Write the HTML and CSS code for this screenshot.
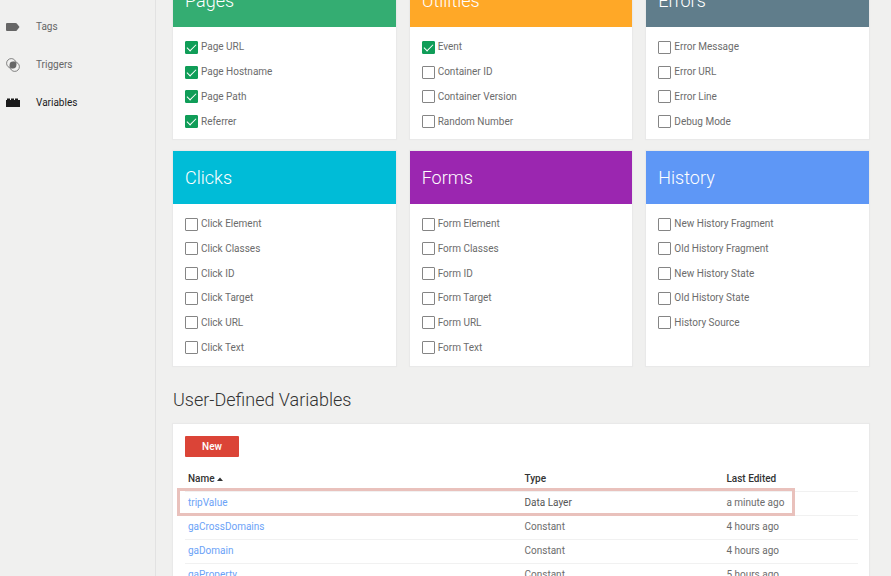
FILE: index.html
```html
<!DOCTYPE html>
<html lang="en">
<head>
<meta charset="utf-8">
<title>Variables</title>
<link rel="stylesheet" href="styles.css">
</head>
<body>
<div class="app">
  <nav class="sidebar" aria-label="Workspace">
    <a class="nav-link" href="#tags">
      <svg class="nav-icon" viewBox="0 0 14 14" aria-hidden="true"><path fill="currentColor" d="M1 3h8.500q.8 0 1.300.6L13.500 7l-2.700 3.400q-.5.600-1.300.6H1q-1 0-1-1V4q0-1 1-1z"/></svg>
      Tags
    </a>
    <a class="nav-link" href="#triggers">
      <svg class="nav-icon" viewBox="0 0 14 14" aria-hidden="true"><g fill="none" stroke="currentColor" stroke-width=".8"><circle cx="5.300" cy="5.300" r="4.700"/><circle cx="8.700" cy="8.700" r="4.700"/></g><circle cx="7" cy="7" r="3.400" fill="currentColor"/></svg>
      Triggers
    </a>
    <a class="nav-link nav-link-active" href="#variables" aria-current="page">
      <svg class="nav-icon" viewBox="0 0 14 14" aria-hidden="true"><path fill="currentColor" d="M0 11V4h1V2.500h3V4h1V2.500h3V4h1V2.500h3V4h2v7z"/></svg>
      Variables
    </a>
  </nav>

  <main class="content">
    <div class="cards">
      <section class="card">
        <h2 class="card-title pages">Pages</h2>
        <div class="options four">
          <label class="option"><input type="checkbox" checked>Page URL</label>
          <label class="option"><input type="checkbox" checked>Page Hostname</label>
          <label class="option"><input type="checkbox" checked>Page Path</label>
          <label class="option"><input type="checkbox" checked>Referrer</label>
        </div>
      </section>
      <section class="card">
        <h2 class="card-title utilities">Utilities</h2>
        <div class="options four">
          <label class="option"><input type="checkbox" checked>Event</label>
          <label class="option"><input type="checkbox">Container ID</label>
          <label class="option"><input type="checkbox">Container Version</label>
          <label class="option"><input type="checkbox">Random Number</label>
        </div>
      </section>
      <section class="card">
        <h2 class="card-title errors">Errors</h2>
        <div class="options four">
          <label class="option"><input type="checkbox">Error Message</label>
          <label class="option"><input type="checkbox">Error URL</label>
          <label class="option"><input type="checkbox">Error Line</label>
          <label class="option"><input type="checkbox">Debug Mode</label>
        </div>
      </section>
      <section class="card">
        <h2 class="card-title clicks">Clicks</h2>
        <div class="options six">
          <label class="option"><input type="checkbox">Click Element</label>
          <label class="option"><input type="checkbox">Click Classes</label>
          <label class="option"><input type="checkbox">Click ID</label>
          <label class="option"><input type="checkbox">Click Target</label>
          <label class="option"><input type="checkbox">Click URL</label>
          <label class="option"><input type="checkbox">Click Text</label>
        </div>
      </section>
      <section class="card">
        <h2 class="card-title forms">Forms</h2>
        <div class="options six">
          <label class="option"><input type="checkbox">Form Element</label>
          <label class="option"><input type="checkbox">Form Classes</label>
          <label class="option"><input type="checkbox">Form ID</label>
          <label class="option"><input type="checkbox">Form Target</label>
          <label class="option"><input type="checkbox">Form URL</label>
          <label class="option"><input type="checkbox">Form Text</label>
        </div>
      </section>
      <section class="card">
        <h2 class="card-title history">History</h2>
        <div class="options six">
          <label class="option"><input type="checkbox">New History Fragment</label>
          <label class="option"><input type="checkbox">Old History Fragment</label>
          <label class="option"><input type="checkbox">New History State</label>
          <label class="option"><input type="checkbox">Old History State</label>
          <label class="option"><input type="checkbox">History Source</label>
        </div>
      </section>
    </div>

    <h1 class="section-title">User-Defined Variables</h1>
    <section class="panel">
      <button class="new-button" type="button">New</button>
      <table class="variables">
        <thead>
          <tr>
            <th class="col-name" scope="col" aria-sort="ascending">Name <svg class="sort" viewBox="0 0 6 4" aria-hidden="true"><path fill="currentColor" d="M0 4l3-3.500L6 4z"/></svg></th>
            <th class="col-type" scope="col">Type</th>
            <th scope="col">Last Edited</th>
          </tr>
        </thead>
        <tbody>
          <tr class="marked">
            <td><a href="#tripValue">tripValue</a><span class="marker"></span></td>
            <td class="marked-type">Data Layer</td>
            <td>a minute ago</td>
          </tr>
          <tr><td><a href="#gaCrossDomains">gaCrossDomains</a></td><td>Constant</td><td>4 hours ago</td></tr>
          <tr><td><a href="#gaDomain">gaDomain</a></td><td>Constant</td><td>4 hours ago</td></tr>
          <tr><td><a href="#gaProperty">gaProperty</a></td><td>Constant</td><td>5 hours ago</td></tr>
        </tbody>
      </table>
    </section>
  </main>
</div>
</body>
</html>
```

FILE: styles.css
```css
* {
  box-sizing: border-box;
}

body {
  margin: 0;
  background: #f0f0ef;
  color: #6c6c6c;
  font: 10px/16px Roboto, "Liberation Sans", sans-serif;
}

a {
  color: #6ba2f7;
  text-decoration: none;
}

.app {
  display: flex;
  height: 100vh;
  overflow: hidden;
}

.sidebar {
  flex: 0 0 156px;
  padding-top: 8px;
  border-right: 1px solid #e2e2e2;
}

.nav-link {
  display: flex;
  align-items: center;
  gap: 16px;
  height: 38px;
  padding-left: 6px;
  color: #666;
}

.nav-link-active {
  color: #1b1b1b;
}

.nav-icon {
  width: 14px;
  height: 14px;
}

.content {
  flex: 1;
  min-width: 0;
  padding: 0 22px 0 17px;
}

/* The first row of cards is partly scrolled out of view. */
.cards {
  display: grid;
  grid-template-columns: repeat(3, 1fr);
  gap: 12px 14px;
  margin-top: -26px;
}

.card,
.panel {
  background: #fff;
  box-shadow: 0 0 1px 1px #e9e9e9;
}

.card-title {
  height: 53px;
  margin: 0;
  padding-left: 12px;
  color: #fff;
  font-size: 18px;
  font-weight: 300;
  line-height: 53px;
}

.pages { background: #34ad72; }
.utilities { background: #ffa827; }
.errors { background: #607d8b; }
.clicks { background: #00bcd7; }
.forms { background: #9b26b0; }
.history { background: #5e97f6; }

.options {
  display: grid;
  padding: 8px 12px 6px;
}

.four {
  grid-template-rows: repeat(4, 1fr);
  height: 112px;
  padding: 8px 12px 5px;
}

.six {
  grid-template-rows: repeat(6, 1fr);
  height: 162px;
}

.option {
  display: flex;
  align-items: center;
  gap: 3px;
}

.option input {
  appearance: none;
  width: 13px;
  height: 13px;
  margin: 0;
  border: 1px solid #858585;
  border-radius: 1px;
  background: #fff;
}

.option input:checked {
  display: grid;
  place-items: center;
  border-color: #109d58;
  background: #109d58;
}

.option input:checked::before {
  content: "";
  width: 8px;
  height: 4px;
  margin-bottom: 2px;
  border: solid #fff;
  border-width: 0 0 1px 1px;
  transform: rotate(-45deg);
}

.section-title {
  margin: 22px 0 12px;
  color: #333;
  font-size: 18px;
  font-weight: 300;
  line-height: 24px;
}

.panel {
  padding: 12px 11px 12px 12px;
}

.new-button {
  display: block;
  width: 54px;
  height: 21px;
  margin-bottom: 10px;
  padding: 0;
  border: 0;
  border-radius: 1px;
  background: #db4437;
  color: #fff;
  font: 500 10px/21px Roboto, "Liberation Sans", sans-serif;
}

.variables {
  width: 100%;
  border-collapse: collapse;
  table-layout: fixed;
}

.variables th,
.variables td {
  height: 24px;
  padding: 0 3px;
  border-bottom: 1px solid #f1f1f1;
  text-align: left;
}

.variables th {
  color: #333;
  font-weight: 500;
}

.col-name {
  width: 50%;
}

.col-type {
  width: 30%;
}

.sort {
  width: 6px;
  height: 4px;
  margin-bottom: 1px;
}

.marked {
  position: relative;
}

.variables .marked-type {
  color: #555;
}

.marker {
  position: absolute;
  inset: -3px 63px -1px -8px;
  border: 3px solid #e9c1bc;
  pointer-events: none;
}
```
